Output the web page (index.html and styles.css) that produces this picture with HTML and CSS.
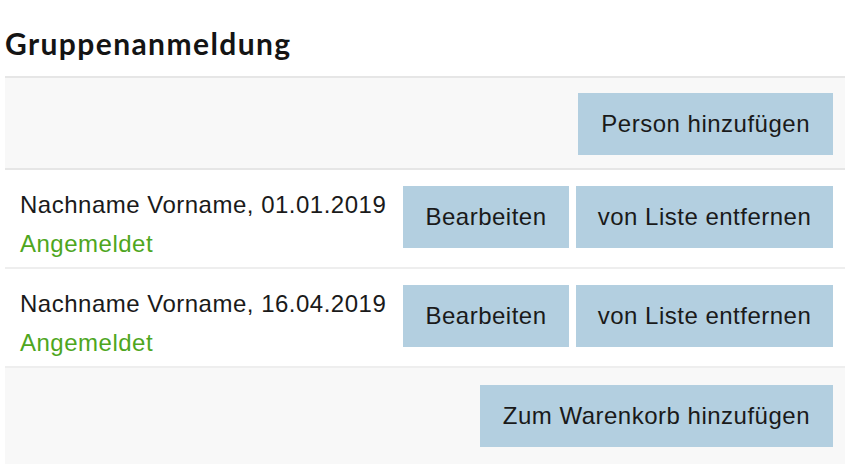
FILE: index.html
```html
<!DOCTYPE html>
<html lang="de">
<head>
    <meta charset="UTF-8">
    <meta name="viewport" content="width=device-width, initial-scale=1.0">
    <title>Gruppenanmeldung</title>
    <link rel="stylesheet" href="styles.css">
</head>
<body>
    <!-- Gruppenanmeldung -->
    <div class="group">
        <h2 class="group-title">Gruppenanmeldung</h2>

        <div class="bar">
            <button class="btn">Person hinzufügen</button>
        </div>

        <ul class="persons">
            <li class="person">
                <div class="person-info">
                    <p class="person-name">Nachname Vorname, 01.01.2019</p>
                    <p class="person-status">Angemeldet</p>
                </div>
                <div class="person-actions">
                    <button class="btn btn-edit">Bearbeiten</button>
                    <button class="btn btn-remove">von Liste entfernen</button>
                </div>
            </li>
            <li class="person">
                <div class="person-info">
                    <p class="person-name">Nachname Vorname, 16.04.2019</p>
                    <p class="person-status">Angemeldet</p>
                </div>
                <div class="person-actions">
                    <button class="btn btn-edit">Bearbeiten</button>
                    <button class="btn btn-remove">von Liste entfernen</button>
                </div>
            </li>
        </ul>

        <div class="bar bar-footer">
            <button class="btn">Zum Warenkorb hinzufügen</button>
        </div>
    </div>
</body>
</html>
```

FILE: styles.css
```css
/* Gruppenanmeldung */
body {
    margin: 0;
    padding: 0;
    background-color: #fff;
    font-family: "Liberation Sans", Arial, sans-serif;
    color: #1a1a1a;
}

.group {
    margin-left: 5px;
    margin-right: 2px;
    padding-top: 25px;
}

.group-title {
    margin: 0 0 15px 0;
    font-family: Lato, sans-serif;
    font-weight: bold;
    font-size: 30px;
    line-height: 36px;
    letter-spacing: 1.4px;
    color: #141414;
}

.bar {
    display: flex;
    justify-content: flex-end;
    padding: 15px 12px 13px 12px;
    background-color: #f8f8f8;
    border-top: 2px solid #e6e6e6;
    border-bottom: 2px solid #e6e6e6;
}

.bar-footer {
    border-top: none;
    border-bottom: none;
    padding-top: 17px;
    padding-bottom: 20px;
}

.btn {
    background-color: #b3cfe0;
    color: #1a1a1a;
    border: none;
    border-radius: 0;
    height: 62px;
    padding: 0 23px;
    font-family: "Liberation Sans", Arial, sans-serif;
    font-size: 24px;
    letter-spacing: 0.5px;
    cursor: pointer;
}

.persons {
    list-style-type: none;
    margin: 0;
    padding: 0;
}

.person {
    display: flex;
    justify-content: space-between;
    align-items: flex-start;
    padding: 16px 12px 3px 15px;
    border-bottom: 2px solid #eeeeee;
}

.person-info p {
    margin: 0;
    font-size: 24px;
    letter-spacing: 0.5px;
}

.person-name {
    line-height: 37px;
}

.person-status {
    line-height: 41px;
    color: #4ea61e;
}

.person-actions {
    display: flex;
    gap: 7px;
}

.btn-edit {
    width: 166px;
    padding: 0;
}

.btn-remove {
    width: 257px;
    padding: 0;
}
```
